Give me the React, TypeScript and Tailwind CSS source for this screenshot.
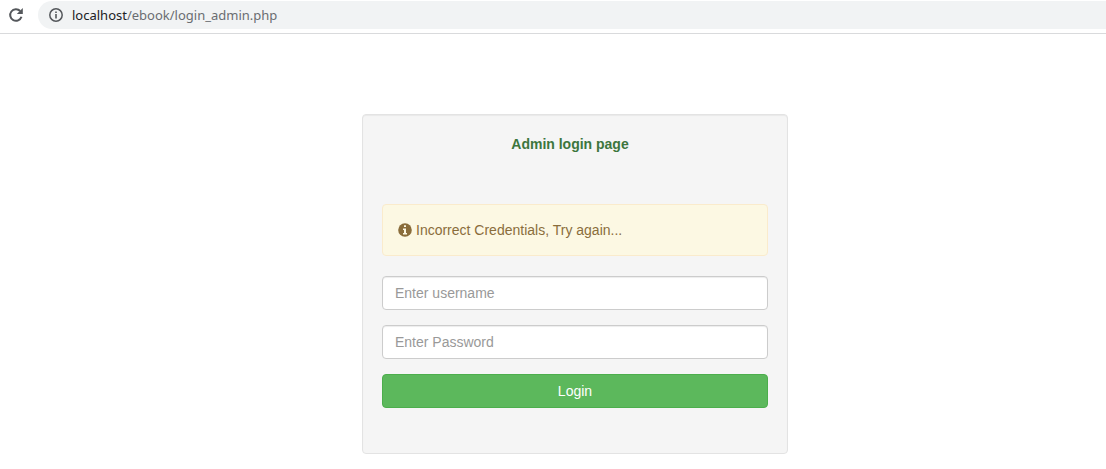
import React from "react";

function ReloadIcon() {
  return (
    <svg viewBox="0 0 16 16" className="h-4 w-4 text-[#54575b]" aria-hidden="true">
      <path d="M13.5 9.8A5.8 5.8 0 1 1 12.2 4" fill="none" stroke="currentColor" strokeWidth="2" />
      <path d="M14.8 1v6H8.8z" fill="currentColor" />
    </svg>
  );
}

function SiteInfoIcon() {
  return (
    <svg viewBox="0 0 14 14" className="h-3.5 w-3.5 shrink-0 text-[#54575b]" aria-hidden="true">
      <circle cx="7" cy="7" r="6.2" fill="none" stroke="currentColor" strokeWidth="1.5" />
      <path d="M6.2 6h1.6v4.4H6.2zM6.2 3.4h1.6V5H6.2z" fill="currentColor" />
    </svg>
  );
}

function AlertInfoIcon() {
  return (
    <svg viewBox="0 0 14 14" className="h-3.5 w-3.5 shrink-0" aria-hidden="true">
      <circle cx="7" cy="7" r="6.8" fill="#8a6d3b" />
      <path d="M6 2.2h2v1.9H6zM5 5.4h3v4.6h1v1.5H5V10h1V6.9H5z" fill="#fcf8e3" />
    </svg>
  );
}

const inputClass =
  "block h-[34px] w-full rounded border border-[#ccc] bg-white px-3 text-sm text-[#555] shadow-[inset_0_1px_1px_rgba(0,0,0,0.075)] outline-none placeholder:text-[#999] focus:border-[#66afe9]";

export default function App() {
  return (
    <div className="font-['Liberation_Sans',Arial,sans-serif] text-sm text-[#333]">
      <header className="flex border-b border-[#d9dadc] pb-1 pt-px">
        <button type="button" aria-label="Reload" className="ml-2 flex h-7 w-[30px] items-center">
          <ReloadIcon />
        </button>
        <div className="flex h-7 flex-1 items-center gap-[9px] rounded-l-full bg-[#f1f3f4] pl-[11px]">
          <SiteInfoIcon />
          <span className="font-['Noto_Sans',sans-serif] text-[13px] text-[#6a6d71]">
            <span className="text-[#202124]">localhost</span>/ebook/login_admin.php
          </span>
        </div>
      </header>

      <main className="flex justify-center pl-11 pt-20">
        <section className="w-full max-w-[426px] rounded border border-[#e3e3e3] bg-[#f5f5f5] px-[19px] pb-[45px] pt-[19px] shadow-[inset_0_1px_1px_rgba(0,0,0,0.05)]">
          <h1 className="mb-[50px] pr-2.5 text-center text-sm font-bold leading-5 text-[#3c763d]">
            Admin login page
          </h1>
          <div
            role="alert"
            className="mb-5 flex items-center gap-1 rounded border border-[#faebcc] bg-[#fcf8e3] p-[15px] leading-5 text-[#8a6d3b]"
          >
            <AlertInfoIcon />
            Incorrect Credentials, Try again...
          </div>
          <form className="flex flex-col gap-[15px]" onSubmit={(e) => e.preventDefault()}>
            <input type="text" aria-label="Enter username" placeholder="Enter username" className={inputClass} />
            <input type="password" aria-label="Enter Password" placeholder="Enter Password" className={inputClass} />
            <button
              type="submit"
              className="h-[34px] w-full cursor-pointer rounded border border-[#4cae4c] bg-[#5cb85c] text-sm leading-5 text-white hover:bg-[#449d44]"
            >
              Login
            </button>
          </form>
        </section>
      </main>
    </div>
  );
}
